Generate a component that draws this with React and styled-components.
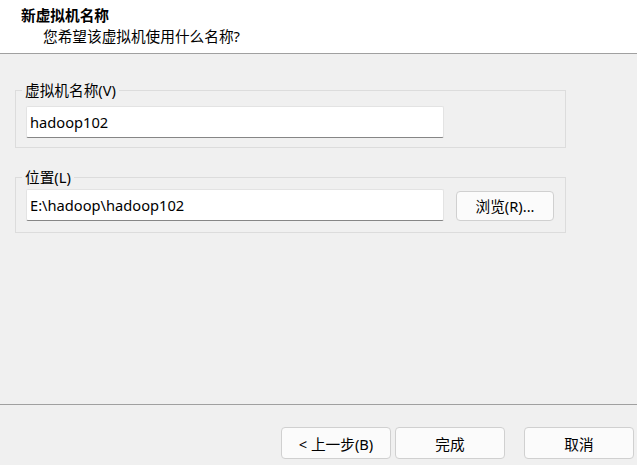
import React from 'react'
import styled, { createGlobalStyle } from 'styled-components'

const GlobalStyle = createGlobalStyle`
  html, body {
    margin: 0;
    padding: 0;
    background: #f0f0f0;
  }
  body {
    font-family: "Segoe UI", "Noto Sans", "Noto Sans CJK SC", sans-serif;
    font-size: 14.67px;
    color: #000;
  }
  * {
    box-sizing: border-box;
  }
`

function App() {
    return (
        <Window>
            <GlobalStyle />
            <Header>
                <Title>新虚拟机名称</Title>
                <Subtitle>您希望该虚拟机使用什么名称?</Subtitle>
            </Header>
            <Main>
                <Group top={26} padTop={6} padBottom={9}>
                    <Legend>虚拟机名称(V)</Legend>
                    <Input defaultValue="hadoop102" />
                </Group>
                <Group top={19} padTop={2} padBottom={11}>
                    <Legend>位置(L)</Legend>
                    <Row>
                        <Input defaultValue="E:\hadoop\hadoop102" />
                        <BrowseButton>浏览(R)...</BrowseButton>
                    </Row>
                </Group>
            </Main>
            <Footer>
                <Button>&lt; 上一步(B)</Button>
                <Button gapLeft={4}>完成</Button>
                <Button gapLeft={19}>取消</Button>
            </Footer>
        </Window>
    )
}

export default App

const Window = styled.div`
  width: 637px;
  height: 465px;
  display: flex;
  flex-direction: column;
  background: #f0f0f0;
  overflow: hidden;
`

const Header = styled.div`
  height: 54px;
  background: #fff;
  border-bottom: 1px solid #a0a0a0;
  padding-top: 5px;
`

const Title = styled.div`
  font-weight: bold;
  line-height: 20px;
  padding-left: 21px;
`

const Subtitle = styled.div`
  line-height: 20px;
  margin-top: 1px;
  padding-left: 43px;
`

const Main = styled.div`
  flex: 1;
`

const Group = styled.fieldset`
  width: 551px;
  margin: ${(p) => p.top}px 0 0 15px;
  padding: ${(p) => p.padTop}px 10px ${(p) => p.padBottom}px 10px;
  border: 1px solid #dcdcdc;
  min-width: 0;
`

const Legend = styled.legend`
  padding: 0 3px;
  margin-left: -4px;
  line-height: 20px;
`

const Row = styled.div`
  display: flex;
  align-items: center;
  gap: 12px;
`

const Input = styled.input`
  width: 418px;
  height: 32px;
  margin: 0;
  padding: 0 3px;
  background: #fff;
  border: 1px solid #e3e3e3;
  border-bottom: 1px solid #868686;
  border-radius: 2px;
  font: inherit;
  color: #000;
  outline: none;
`

const BrowseButton = styled.button`
  width: 98px;
  height: 30px;
  margin-top: 1px;
  background: #fbfbfb;
  border: 1px solid #d0d0d0;
  border-radius: 4px;
  font: inherit;
  color: #000;
  padding: 0;
`

const Footer = styled.div`
  height: 61px;
  border-top: 1px solid #a0a0a0;
  display: flex;
  justify-content: flex-end;
  align-items: flex-start;
  padding: 22px 3px 0 0;
`

const Button = styled.button`
  width: 110px;
  height: 32px;
  margin-left: ${(p) => p.gapLeft || 0}px;
  background: #fbfbfb;
  border: 1px solid #d0d0d0;
  border-radius: 4px;
  font: inherit;
  color: #000;
  padding: 0;
`
